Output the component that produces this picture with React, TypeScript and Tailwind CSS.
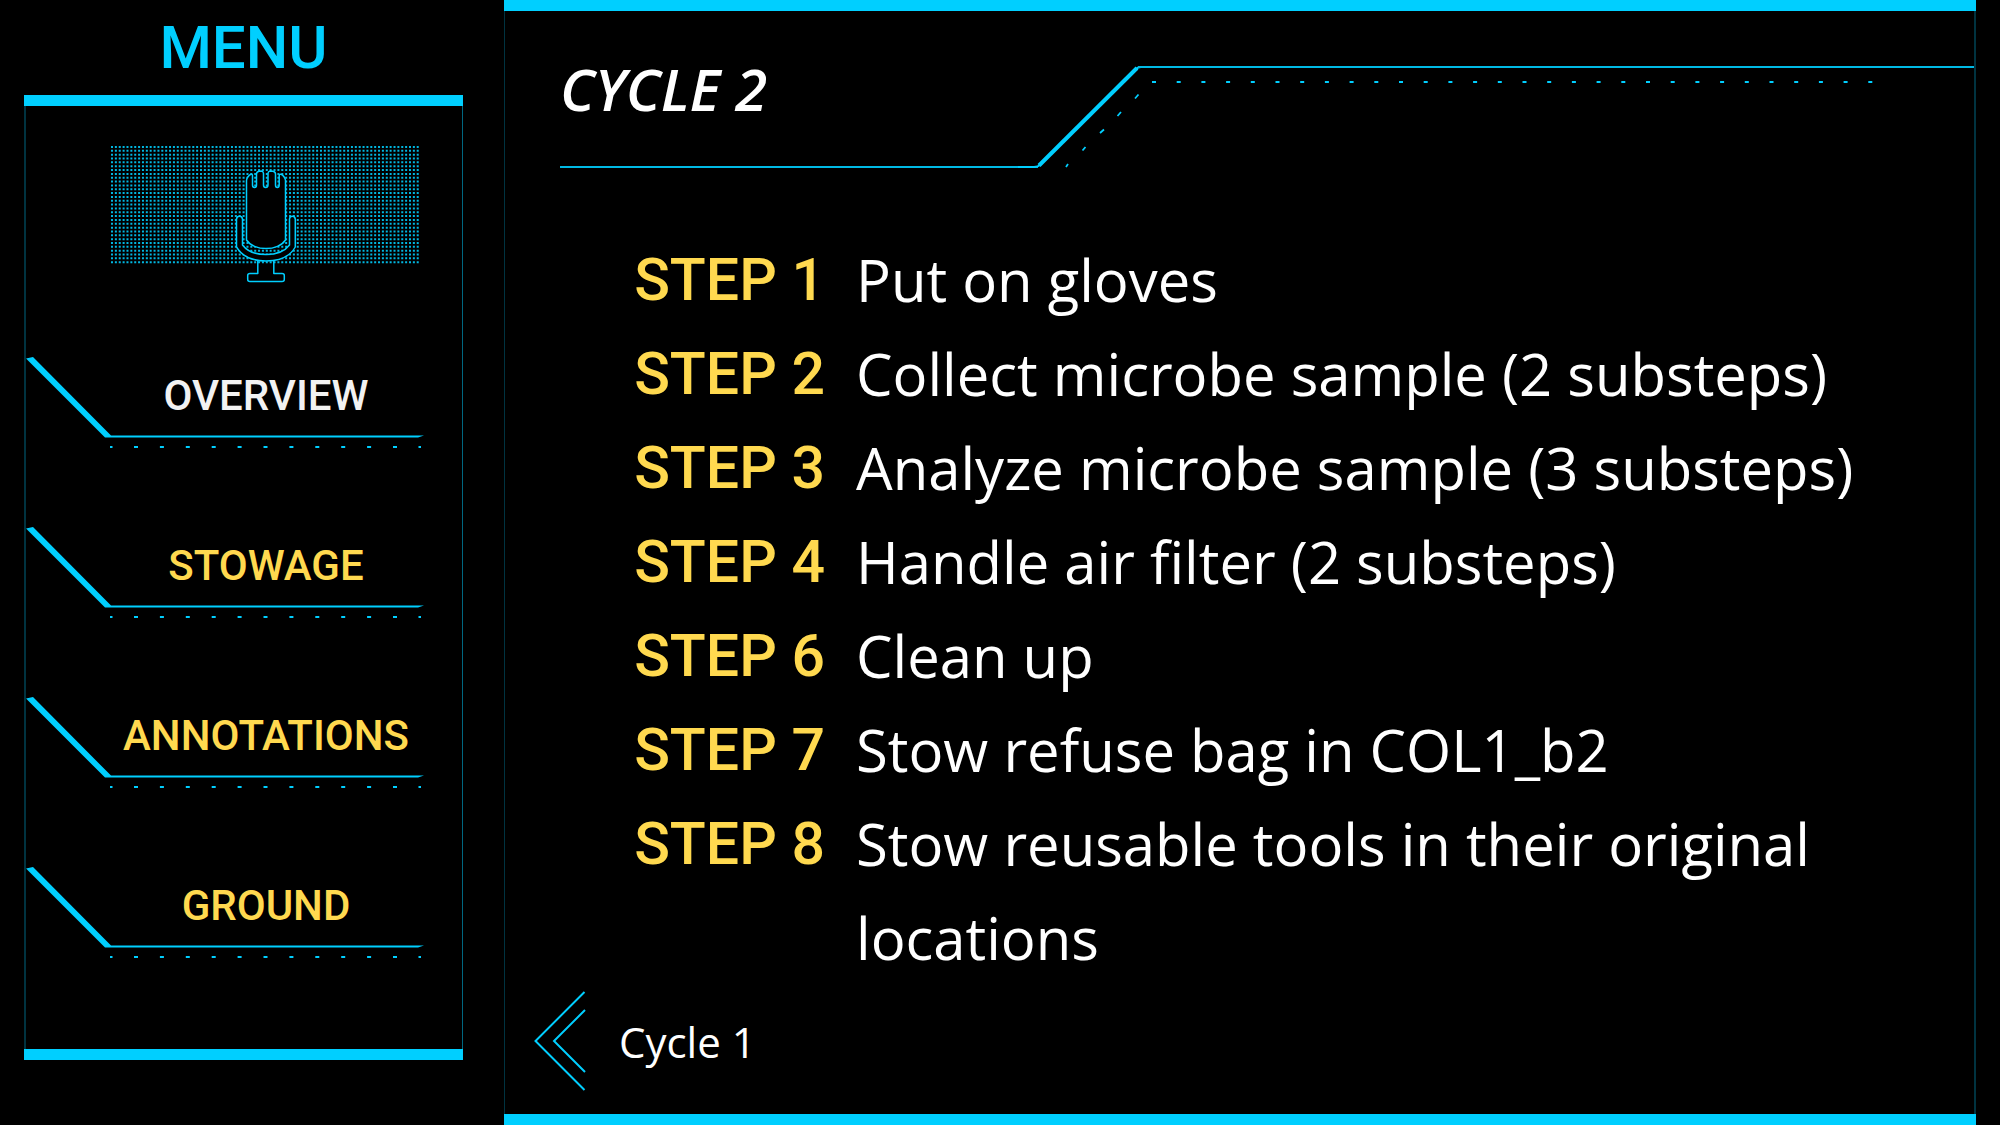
const CYAN = '#00cfff'

const MENU_ITEMS = [
  { label: 'OVERVIEW', current: true },
  { label: 'STOWAGE', current: false },
  { label: 'ANNOTATIONS', current: false },
  { label: 'GROUND', current: false },
]

const STEPS = [
  { label: 'STEP 1', text: 'Put on gloves' },
  { label: 'STEP 2', text: 'Collect microbe sample (2 substeps)' },
  { label: 'STEP 3', text: 'Analyze microbe sample (3 substeps)' },
  { label: 'STEP 4', text: 'Handle air filter (2 substeps)' },
  { label: 'STEP 6', text: 'Clean up' },
  { label: 'STEP 7', text: 'Stow refuse bag in COL1_b2' },
  { label: 'STEP 8', text: 'Stow reusable tools in their original locations' },
]

// Halftone backdrop behind the microphone: 80 x 31 small squares.
const DOT_ROWS = Array.from({ length: 31 }, (_, row) =>
  Array.from({ length: 80 }, (_, col) => `M${(col * 3.87).toFixed(2)} ${(row * 3.84).toFixed(2)}h2v2h-2z`).join(''),
).join('')

function Microphone() {
  return (
    <svg viewBox="111 146 309 137" className="h-[137px] w-[309px]" aria-hidden="true">
      <path d={DOT_ROWS} transform="translate(111 146)" fill={CYAN} fillOpacity="0.88" />
      <g fill="none" stroke={CYAN} strokeWidth="1.5" strokeLinejoin="round">
        <path
          fill="#000"
          d="M246.5 180.5 C246.5 178 249 175 251 174.3 Q252.5 174 252.5 176 V185 Q252.5 187.5 254.5 187.5 T256.5 185 V174 Q256.5 172 259 171.3 L261.5 171 Q263.5 171.5 263.5 173.5 V185 Q263.5 187.5 265.7 187.5 T268 185 V173.5 Q268 171.5 270 171 L273 171.3 Q275.5 172 275.5 174 V185 Q275.5 187.5 277.3 187.5 T279.2 185 V176 Q279.2 174 281 174.3 C283 175 285.5 178 285.5 180.5 V240 C282 245.5 274 248.6 266 248.6 C258 248.6 250 245.5 246.5 240 Z"
        />
        <path
          fill="#000"
          d="M236.5 219 Q237 216.3 239.5 216.3 T242.5 219 V245 C247 251 256 254.5 266 254.5 C276 254.5 285 251 289.5 245 V219 Q289.8 216.3 292.3 216.3 T295.3 219 V247 C290 256.5 279 261 266 261 C253 261 242 256.5 236.5 247 Z"
        />
        <path d="M257.8 261 V273.5 H250 Q247.7 273.5 247.7 275.5 V279.5 Q247.7 281.5 250 281.5 H282 Q284.3 281.5 284.3 279.5 V275.5 Q284.3 273.5 282 273.5 H273.8 V261" />
      </g>
    </svg>
  )
}

function Bar() {
  return <div className="h-[11px] shrink-0 bg-[#00cfff]" />
}

function MenuLink({ label, current }: { label: string; current: boolean }) {
  return (
    <a
      href={`#${label.toLowerCase()}`}
      aria-current={current ? 'page' : undefined}
      className="grid w-[398px] max-w-full"
    >
      <svg viewBox="0 0 398 92" className="h-[92px] w-[398px] [grid-area:1/1]" aria-hidden="true">
        <path d="M0 1.5 L7 0 L85 78.6 L398 78.6 L392 80.6 L79 80.6 Z" fill={CYAN} />
        <path d="M84 90 h2.5 M392.5 90 h2.5" stroke={CYAN} strokeWidth="2" />
        <path d="M108 90 H372" stroke={CYAN} strokeWidth="2" strokeDasharray="4 21.9" />
      </svg>
      <span
        className={`pt-[15px] pl-[82px] text-center text-[42px] leading-[48px] font-medium [grid-area:1/1] ${
          current ? 'text-[#f2f2f2]' : 'text-[#ffd94f]'
        }`}
      >
        {label}
      </span>
    </a>
  )
}

function Sidebar() {
  return (
    <aside className="flex w-[504px] shrink-0 flex-col pr-[41px] pb-[65px] pl-6 font-[Roboto,sans-serif]">
      <h2 className="pt-[18px] pb-[17px] text-center text-[60px] leading-[60px] font-medium text-[#00cfff]">MENU</h2>
      <Bar />
      <div className="flex flex-1 flex-col border-r border-l-2 border-r-[#006780] border-l-[#003340]">
        <button type="button" aria-label="Voice command" className="mt-10 ml-[85px] w-fit">
          <Microphone />
        </button>
        <nav aria-label="Menu" className="mt-[74px] flex flex-col gap-[78px]">
          {MENU_ITEMS.map((item) => (
            <MenuLink key={item.label} {...item} />
          ))}
        </nav>
      </div>
      <Bar />
    </aside>
  )
}

function CycleHeader() {
  return (
    <header className="mt-[55px] flex pl-[55px]">
      <h1 className="w-[478px] border-b-2 border-[#00b9e4] text-[58px] leading-[46px] font-semibold text-white italic">
        CYCLE 2
      </h1>
      <svg viewBox="0 0 100 102" className="h-[102px] w-[100px] shrink-0 overflow-visible" aria-hidden="true">
        <path d="M-20 101 H-4 Q0 101 2.5 98.5 L98 3 Q100 1 103 1" fill="none" stroke={CYAN} strokeWidth="2" />
        <path d="M1 99.5 L99 2" stroke={CYAN} strokeWidth="4" />
        <path
          d="M28 101 l2 -3 M44.5 84.5 l3 -3.5 M62 67 l4 -3.5 M79.5 50 l3.5 -4 M97 32.5 l3.5 -4"
          stroke={CYAN}
          strokeWidth="1.8"
        />
      </svg>
      <div className="flex-1 border-t-2 border-[#00b9e4]">
        <svg className="mt-[13px] h-0.5 w-[738px] max-w-full" aria-hidden="true">
          <path d="M14 1 H737" stroke={CYAN} strokeWidth="2" strokeDasharray="4 20.7" />
        </svg>
      </div>
    </header>
  )
}

export default function App() {
  return (
    <div className="flex min-h-screen bg-black pr-6 font-['Open_Sans',sans-serif]">
      <Sidebar />
      <main className="flex min-w-0 flex-1 flex-col">
        <Bar />
        <div className="flex flex-1 flex-col border-r-2 border-l border-r-[#003340] border-l-[#003340]">
          <CycleHeader />
          <ol className="mt-[65px] flex flex-col pr-20">
            {STEPS.map((step) => (
              <li key={step.label} className="flex gap-[31px] leading-[94px]">
                <span className="w-[320px] shrink-0 text-right font-[Roboto,sans-serif] text-[59px] font-medium text-[#ffd94f]">
                  {step.label}
                </span>
                <span className="text-[58px] text-white">{step.text}</span>
              </li>
            ))}
          </ol>
          <a
            href="#cycle-1"
            className="mt-auto mb-[23px] ml-[29px] flex w-fit items-center gap-[33px] text-[42px] text-white"
          >
            <svg viewBox="0 0 52 100" className="h-[100px] w-[52px]" fill="none" stroke={CYAN} strokeWidth="2" aria-hidden="true">
              <path d="M50.5 1 L1.5 50 L50.5 99" />
              <path d="M51 19 L20 50 L51 81" />
            </svg>
            <span>Cycle 1</span>
          </a>
        </div>
        <Bar />
      </main>
    </div>
  )
}
